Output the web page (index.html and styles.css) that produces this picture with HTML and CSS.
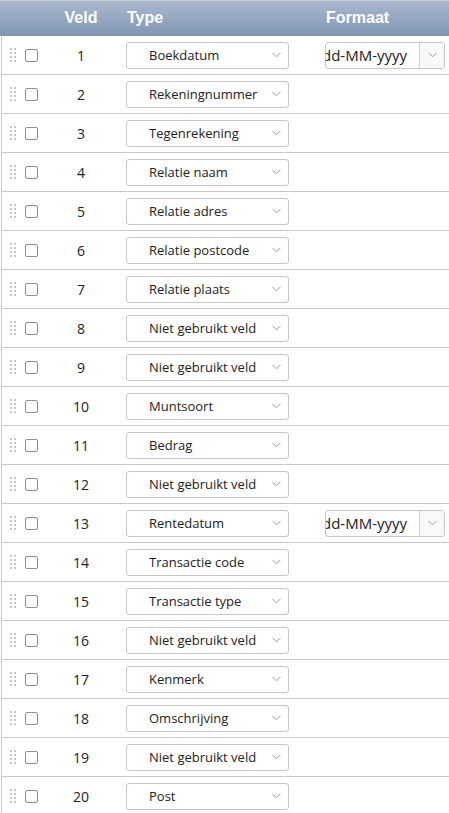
FILE: index.html
```html
<!DOCTYPE html>
<html lang="nl">
<head>
<meta charset="utf-8">
<title>Velden</title>
<link rel="stylesheet" href="styles.css">
</head>
<body>
<div class="table">
  <div class="head">
    <div class="h-sel"></div>
    <div class="h-veld">Veld</div>
    <div class="h-type">Type</div>
    <div class="h-fmt">Formaat</div>
  </div>
  <div id="rows"></div>
</div>
<script src="app.js"></script>
</body>
</html>
```
FILE: app.js
```js
const types = ["Boekdatum","Rekeningnummer","Tegenrekening","Relatie naam","Relatie adres","Relatie postcode","Relatie plaats","Niet gebruikt veld","Niet gebruikt veld","Muntsoort","Bedrag","Niet gebruikt veld","Rentedatum","Transactie code","Transactie type","Niet gebruikt veld","Kenmerk","Omschrijving","Niet gebruikt veld","Post"];
const chev = '<svg class="chev" width="9" height="6" viewBox="0 0 9 6"><path d="M0.5 0.8 L4.5 4.8 L8.5 0.8" fill="none" stroke="#999" stroke-width="1"/></svg>';
const rows = document.getElementById("rows");
let html = "";
types.forEach((t, i) => {
  const fmt = (t === "Boekdatum" || t === "Rentedatum")
    ? '<div class="fmt"><div class="fmt-in"><span>dd-MM-yyyy</span></div><div class="fmt-btn">' + chev + '</div></div>'
    : '';
  html += '<div class="row">' +
    '<div class="c-sel"><span class="handle"><i></i><i></i><i></i><i></i><i></i><i></i><i></i><i></i></span><span class="cb"></span></div>' +
    '<div class="c-veld">' + (i + 1) + '</div>' +
    '<div class="c-type"><div class="select"><span>' + t + '</span>' + chev + '</div></div>' +
    '<div class="c-fmt">' + fmt + '</div>' +
    '</div>';
});
rows.innerHTML = html;
```
FILE: styles.css
```css
html, body {
  margin: 0;
  padding: 0;
  background: #fff;
}
body {
  font-family: "Open Sans", "Noto Sans", sans-serif;
  font-size: 13px;
  color: #333;
}
.table {
  width: 449px;
}
.head, .row {
  display: grid;
  grid-template-columns: 44px 74px 199px 132px;
}
.head {
  height: 36px;
  padding-bottom: 1px;
  align-items: center;
  background: linear-gradient(#aab8cd, #8195b4);
  border-top: 1px solid #c9d0da;
  box-sizing: border-box;
  font-family: "Liberation Sans", Arial, sans-serif;
  font-weight: bold;
  font-size: 16px;
  color: #fff;
}
.h-veld { text-align: center; }
.h-type { padding-left: 9px; }
.h-fmt { padding-left: 9px; }
.row {
  height: 39px;
  margin-left: 1px;
  border-left: 1px solid #c8c8c8;
  border-bottom: 1px solid #c8c8c8;
  box-sizing: border-box;
  align-items: center;
  grid-template-columns: 42px 74px 199px 132px;
}
.c-sel {
  display: flex;
  align-items: center;
  padding-left: 8px;
}
.handle {
  display: grid;
  grid-template-columns: 2px 2px;
  column-gap: 2px;
  row-gap: 2px;
  width: 6px;
}
.handle i {
  display: block;
  width: 2px;
  height: 2px;
  background: #c6c6c6;
}
.cb {
  display: block;
  width: 13px;
  height: 13px;
  margin-left: 9px;
  border: 1px solid #8f8f8f;
  border-radius: 2px;
  box-sizing: border-box;
}
.c-veld {
  text-align: center;
  font-size: 14px;
  color: #222;
}
.c-type {
  padding-left: 8px;
}
.select {
  width: 163px;
  height: 27px;
  border: 1px solid #c6c6c6;
  border-radius: 3px;
  box-sizing: border-box;
  display: flex;
  align-items: center;
  justify-content: space-between;
  padding: 0 7px 0 22px;
  font-size: 13px;
  color: #222;
}
.chev { display: block; }
.c-fmt {
  padding-left: 8px;
}
.fmt {
  width: 120px;
  height: 27px;
  display: flex;
  border: 1px solid #c6c6c6;
  border-radius: 3px;
  box-sizing: border-box;
  overflow: hidden;
}
.fmt-in {
  flex: 1;
  overflow: hidden;
  display: flex;
  align-items: center;
  white-space: nowrap;
  font-size: 15px;
  color: #222;
}
.fmt-in span {
  margin-left: -4px;
}
.fmt-btn {
  width: 24px;
  border-left: 1px solid #d0d0d0;
  background: #f9f9f9;
  display: flex;
  align-items: center;
  justify-content: center;
}
```
